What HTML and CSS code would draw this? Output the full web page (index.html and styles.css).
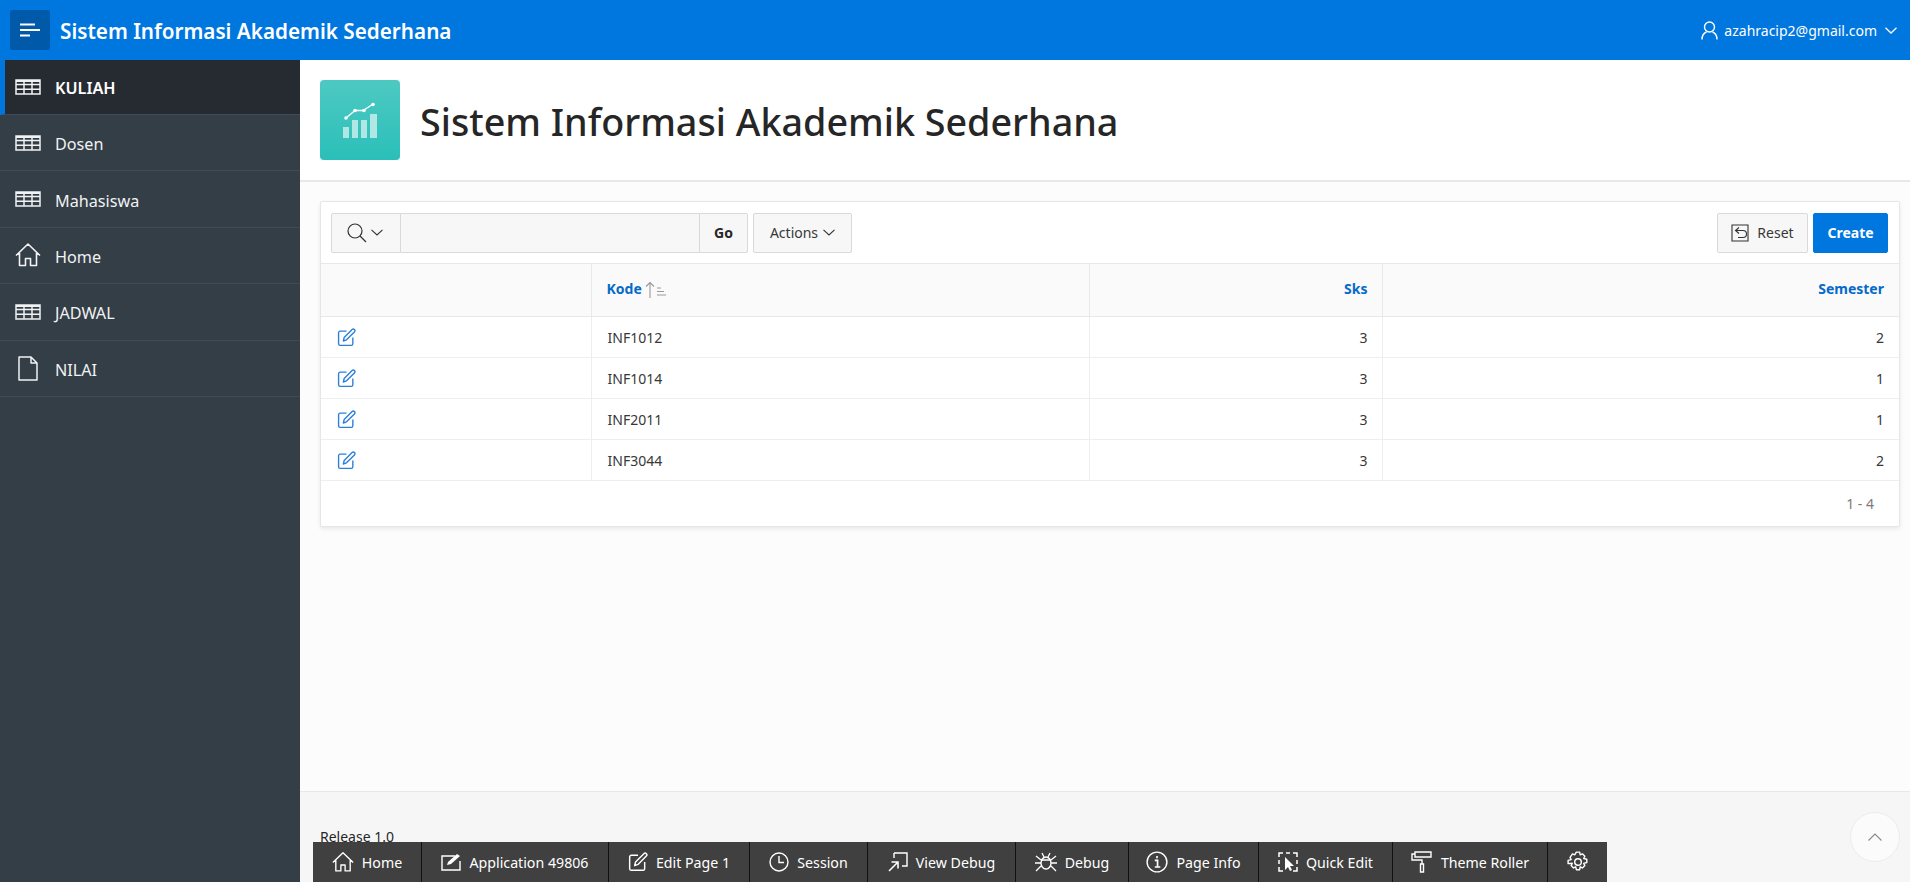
FILE: index.html
```html
<!DOCTYPE html>
<html lang="en">
<head>
<meta charset="UTF-8" />
<title>Sistem Informasi Akademik Sederhana</title>
<link rel="stylesheet" href="styles.css">
</head>
<body>

<svg class="defs" aria-hidden="true">
  <symbol id="i-table" viewBox="0 0 26 16">
    <path d="M1 1h24v14H1zM1 5.500h24M1 10.200h24M9 1v14M17 1v14" fill="none" stroke="currentColor" stroke-width="1.500"/>
    <path d="M1 1h24v2H1z" fill="currentColor"/>
  </symbol>
  <symbol id="i-home" viewBox="0 0 26 24">
    <path d="M1 12.500 13 1l12 11.500M4.500 10v12.500h6v-7h5v7h6V10" fill="none" stroke="currentColor" stroke-width="1.600" stroke-linejoin="round"/>
  </symbol>
  <symbol id="i-edit" viewBox="0 0 18 18">
    <path d="M9 3H3a1.500 1.500 0 0 0-1.500 1.500v10.500a1.500 1.500 0 0 0 1.500 1.500h10.500a1.500 1.500 0 0 0 1.500-1.500V9" fill="none" stroke="currentColor" stroke-width="1.300"/>
    <path d="M6 12.300 6.800 9 14.300 1.500a1.400 1.400 0 0 1 2.200 2.200L9 11.200z" fill="none" stroke="currentColor" stroke-width="1.300" stroke-linejoin="round"/>
  </symbol>
</svg>

<header class="topbar">
  <div class="topbar-left">
    <button class="nav-toggle" aria-label="Menu">
      <svg width="20" height="14" viewBox="0 0 20 14"><path d="M0 1.500h15M0 7h20M0 12.500h10" stroke="#fff" stroke-width="2.200"/></svg>
    </button>
    <span class="app-title">Sistem Informasi Akademik Sederhana</span>
  </div>
  <div class="user-menu">
    <svg width="17" height="19" viewBox="0 0 17 19"><circle cx="8.500" cy="6" r="5" fill="none" stroke="#fff" stroke-width="1.400"/><path d="M1 18.500c0-4 2-6.500 4.500-7.500M16 18.500c0-4-2-6.500-4.500-7.500" fill="none" stroke="#fff" stroke-width="1.400"/></svg>
    <span>azahracip2@gmail.com</span>
    <svg width="12" height="7" viewBox="0 0 12 7"><path d="M.5.800 6 6l5.500-5.200" fill="none" stroke="#fff" stroke-width="1.300"/></svg>
  </div>
</header>

<div class="shell">
  <nav class="sidebar">
    <a class="nav-item active"><svg class="nav-icon"><use href="#i-table"/></svg>KULIAH</a>
    <a class="nav-item"><svg class="nav-icon"><use href="#i-table"/></svg>Dosen</a>
    <a class="nav-item"><svg class="nav-icon"><use href="#i-table"/></svg>Mahasiswa</a>
    <a class="nav-item"><svg class="nav-icon home"><use href="#i-home"/></svg>Home</a>
    <a class="nav-item"><svg class="nav-icon"><use href="#i-table"/></svg>JADWAL</a>
    <a class="nav-item">
      <svg class="nav-icon file" viewBox="0 0 20 25"><path d="M1 1h12l6 6v17H1zM13 1v6h6" fill="none" stroke="currentColor" stroke-width="1.500" stroke-linejoin="round"/></svg>NILAI
    </a>
  </nav>

  <main class="content">
    <section class="hero">
      <div class="hero-icon">
        <svg width="34" height="36" viewBox="0 0 34 36">
          <path d="M3 16 12 8.500 20 8.500 31 1.500" fill="none" stroke="#fff" stroke-width="1.300"/>
          <circle cx="3" cy="16" r="1.800" fill="#fff"/><circle cx="12" cy="8.500" r="1.800" fill="#fff"/><circle cx="21" cy="8.500" r="1.800" fill="#fff"/><circle cx="30" cy="2.500" r="1.800" fill="#fff"/>
          <path d="M0 25h6v11H0zM9 18h6v18H9zM18 18h6v18h-6zM27 12h7v24h-7z" fill="#fff" fill-opacity=".6"/>
        </svg>
      </div>
      <h1>Sistem Informasi Akademik Sederhana</h1>
    </section>

    <div class="body-area">
      <section class="report">
        <div class="toolbar">
          <div class="search-group">
            <button class="btn search-btn">
              <svg width="20" height="20" viewBox="0 0 20 20"><circle cx="8" cy="8" r="7" fill="none" stroke="#333" stroke-width="1.200"/><path d="m13 13 6 6" stroke="#333" stroke-width="1.200"/></svg>
              <svg width="12" height="7" viewBox="0 0 12 7"><path d="M.5.800 6 6l5.500-5.200" fill="none" stroke="#333" stroke-width="1.100"/></svg>
            </button>
            <input class="search-input" type="text" aria-label="Search">
            <button class="btn go-btn">Go</button>
          </div>
          <button class="btn actions-btn">Actions
            <svg width="12" height="7" viewBox="0 0 12 7"><path d="M.5.800 6 6l5.500-5.200" fill="none" stroke="#333" stroke-width="1.100"/></svg>
          </button>
          <div class="toolbar-right">
            <button class="btn reset-btn">
              <svg width="18" height="18" viewBox="0 0 18 18"><path d="M1 1h16v16H1z" fill="none" stroke="#333" stroke-width="1.100"/><path d="M8 3.500 4.500 6.500 8 9.500M4.500 6.500H12a3 3 0 0 1 0 7H7" fill="none" stroke="#333" stroke-width="1.100"/></svg>
              Reset
            </button>
            <button class="btn create-btn">Create</button>
          </div>
        </div>

        <table class="grid">
          <colgroup>
            <col class="col-link"><col class="col-kode"><col class="col-sks"><col>
          </colgroup>
          <thead>
            <tr>
              <th></th>
              <th class="kode-head">Kode
                <svg width="22" height="17" viewBox="0 0 22 17"><path d="M5 17V1.500M1 5.500l4-4 4 4" fill="none" stroke="#999" stroke-width="1.100"/><path d="M12 7h4M12 10.500h7M12 14h9" stroke="#999" stroke-width="1.100"/></svg>
              </th>
              <th class="num">Sks</th>
              <th class="num">Semester</th>
            </tr>
          </thead>
          <tbody>
            <tr>
              <td class="link-cell"><svg class="edit-icon"><use href="#i-edit"/></svg></td>
              <td>INF1012</td><td class="num">3</td><td class="num">2</td>
            </tr>
            <tr>
              <td class="link-cell"><svg class="edit-icon"><use href="#i-edit"/></svg></td>
              <td>INF1014</td><td class="num">3</td><td class="num">1</td>
            </tr>
            <tr>
              <td class="link-cell"><svg class="edit-icon"><use href="#i-edit"/></svg></td>
              <td>INF2011</td><td class="num">3</td><td class="num">1</td>
            </tr>
            <tr>
              <td class="link-cell"><svg class="edit-icon"><use href="#i-edit"/></svg></td>
              <td>INF3044</td><td class="num">3</td><td class="num">2</td>
            </tr>
          </tbody>
        </table>
        <div class="pagination">1 - 4</div>
      </section>
    </div>

    <footer class="page-footer">Release 1.0</footer>
  </main>
</div>

<div class="dev-toolbar">
  <a class="dev-item w-home"><svg class="dev-icon big"><use href="#i-home"/></svg>Home</a>
  <a class="dev-item w-app">
    <svg class="dev-icon" viewBox="0 0 20 18"><path d="M14 3H1v14h18V8" fill="none" stroke="currentColor" stroke-width="1.400"/><path d="m6 12 1-3 9-8 3 2-9 8z" fill="currentColor"/></svg>Application 49806
  </a>
  <a class="dev-item w-edit"><svg class="dev-icon"><use href="#i-edit"/></svg>Edit Page 1</a>
  <a class="dev-item w-session">
    <svg class="dev-icon" viewBox="0 0 20 20"><circle cx="10" cy="10" r="9" fill="none" stroke="currentColor" stroke-width="1.400"/><path d="M10 4v6.500h5" fill="none" stroke="currentColor" stroke-width="1.400"/></svg>Session
  </a>
  <a class="dev-item w-view">
    <svg class="dev-icon" viewBox="0 0 20 20"><path d="M6 1h13v13h-5M6 1v5" fill="none" stroke="currentColor" stroke-width="1.400"/><path d="M1 19 9 11M3.500 10H10v6.500" fill="none" stroke="currentColor" stroke-width="1.600"/></svg>View Debug
  </a>
  <a class="dev-item w-debug">
    <svg class="dev-icon big" viewBox="0 0 22 20"><ellipse cx="11" cy="11" rx="5" ry="6" fill="none" stroke="currentColor" stroke-width="1.400"/><path d="M6 8h10M7 1l2 4M15 1l-2 4M1 4l5 4M21 4l-5 4M0 11h6M22 11h-6M1 19l5-5M21 19l-5-5" fill="none" stroke="currentColor" stroke-width="1.300"/></svg>Debug
  </a>
  <a class="dev-item w-info">
    <svg class="dev-icon big" viewBox="0 0 20 20"><circle cx="10" cy="10" r="9" fill="none" stroke="currentColor" stroke-width="1.300"/><path d="M8 8.500h2.500V14M8 14.500h5M10 4.500v2" fill="none" stroke="currentColor" stroke-width="1.500"/></svg>Page Info
  </a>
  <a class="dev-item w-quick">
    <svg class="dev-icon" viewBox="0 0 20 20"><path d="M1 5V1h4M8 1h4M15 1h4v4M1 8v4M19 8v4M1 15v4h4M15 19h4v-4" fill="none" stroke="currentColor" stroke-width="1.500"/><path d="M7 5v13l3-3 2 4 2-1-2-4h4z" fill="currentColor"/></svg>Quick Edit
  </a>
  <a class="dev-item w-theme">
    <svg class="dev-icon big" viewBox="0 0 20 22"><path d="M3 1h16v5H3zM3 3H0v6h10v4" fill="none" stroke="currentColor" stroke-width="1.400"/><path d="M8.500 13h3v8h-3z" fill="none" stroke="currentColor" stroke-width="1.400"/></svg>Theme Roller
  </a>
  <a class="dev-item w-gear">
    <svg class="dev-icon big" viewBox="0 0 20 20"><circle cx="10" cy="10" r="3" fill="none" stroke="currentColor" stroke-width="1.300"/><path d="M8.500 1h3l.5 2.500 2-.9 2.200 2.200-1 2 2.800.7v3l-2.800.7 1 2-2.200 2.200-2-1-.5 2.600h-3l-.6-2.600-2 1-2.100-2.200 1-2L1 11.500v-3l2.800-.7-1-2L5 2.600l2 .9z" fill="none" stroke="currentColor" stroke-width="1.300" stroke-linejoin="round"/></svg>
  </a>
</div>

<button class="to-top" aria-label="Top">
  <svg width="14" height="8" viewBox="0 0 14 8"><path d="M.5 7.500 7 1l6.500 6.500" fill="none" stroke="#888" stroke-width="1.100"/></svg>
</button>

</body>
</html>
```

FILE: styles.css
```css
/* Page frame */
html {
  background: #fff;
}

body {
  font-family: "Noto Sans", "Open Sans", sans-serif;
  margin: 0;
  height: 882px;
  overflow: hidden;
  display: flex;
  flex-direction: column;
  color: #262626;
  font-size: 14px;
}

.defs {
  display: none;
}

button {
  font-family: inherit;
}

/* Top bar */
.topbar {
  height: 60px;
  flex: none;
  background: #0076df;
  color: #fff;
  display: flex;
  justify-content: space-between;
  align-items: center;
  padding: 0 13px 0 10px;
}

.topbar-left {
  display: flex;
  align-items: center;
  gap: 10px;
}

.nav-toggle {
  width: 40px;
  height: 40px;
  border: none;
  border-radius: 2px;
  background: #0059a9;
  display: flex;
  align-items: center;
  justify-content: center;
  padding: 0;
}

.app-title {
  font-size: 20.7px;
  font-weight: 600;
  padding-top: 1px;
}

.user-menu {
  display: flex;
  align-items: center;
  gap: 6px;
  font-size: 14px;
}

.user-menu span {
  margin-right: 2px;
}

/* Side navigation */
.shell {
  flex: 1;
  display: flex;
  min-height: 0;
}

.sidebar {
  width: 300px;
  flex: none;
  background: #343e47;
}

.nav-item {
  height: 56.4px;
  box-sizing: border-box;
  display: flex;
  align-items: center;
  padding: 3px 0 0 15px;
  border-bottom: 1px solid #414b54;
  color: #f1f2f3;
  font-size: 16.2px;
}

.nav-item.active {
  height: 55px;
  background: #262b32;
  border-left: 5px solid #0076df;
  padding: 2px 0 0 10px;
  color: #fff;
  font-weight: 600;
}

.nav-icon {
  width: 26px;
  height: 16px;
  margin: -3px 14px 0 0;
  color: #f1f2f3;
}

.nav-icon.home {
  height: 24px;
}

.nav-icon.file {
  height: 25px;
  width: 20px;
  margin: -3px 17px 0 3px;
}

/* Main column */
.content {
  flex: 1;
  display: flex;
  flex-direction: column;
  background: #fcfcfc;
  min-width: 0;
}

.hero {
  height: 120px;
  flex: none;
  box-sizing: content-box;
  background: #fff;
  border-bottom: 2px solid #e8e8e8;
  display: flex;
  align-items: center;
  padding-left: 20px;
  gap: 20px;
}

.hero-icon {
  width: 80px;
  height: 80px;
  border-radius: 4px;
  background: linear-gradient(#4dc9c2, #2bbfb9);
  display: flex;
  align-items: center;
  justify-content: center;
}

.hero h1 {
  margin: 0;
  padding-top: 2px;
  font-size: 37.7px;
  font-weight: 500;
  color: #262626;
}

.body-area {
  flex: 1;
  padding: 19px 10px 0 20px;
}

/* Report card */
.report {
  background: #fff;
  border: 1px solid #e6e6e6;
  box-shadow: 0 2px 4px rgba(0, 0, 0, 0.08);
  border-radius: 2px;
  height: 326px;
  box-sizing: border-box;
}

.toolbar {
  height: 61px;
  box-sizing: border-box;
  display: flex;
  align-items: center;
  padding: 0 11px 0 10px;
  gap: 5px;
}

.btn {
  height: 40px;
  box-sizing: border-box;
  border: 1px solid #d9d9d9;
  background: #f7f7f7;
  color: #383838;
  font-size: 14px;
  border-radius: 2px;
  display: flex;
  align-items: center;
  justify-content: center;
  padding: 0;
}

.search-group {
  display: flex;
}

.search-btn {
  width: 70px;
  gap: 4px;
  padding-right: 2px;
  border-radius: 2px 0 0 2px;
}

.search-input {
  width: 298px;
  height: 40px;
  box-sizing: border-box;
  border: 1px solid #d9d9d9;
  border-left: none;
  border-right: none;
  background: #f7f7f7;
  padding: 0;
}

.go-btn {
  width: 49px;
  font-weight: 700;
  color: #262626;
  border-radius: 0 2px 2px 0;
}

.actions-btn {
  width: 99px;
  gap: 5px;
}

.toolbar-right {
  margin-left: auto;
  display: flex;
  gap: 5px;
}

.reset-btn {
  width: 91px;
  gap: 8px;
}

.create-btn {
  width: 75px;
  background: #0076df;
  border-color: #0076df;
  color: #fff;
  font-weight: 700;
}

/* Grid */
.grid {
  width: 100%;
  border-collapse: collapse;
  table-layout: fixed;
  color: #383838;
}

.col-link {
  width: 270px;
}

.col-kode {
  width: 498px;
}

.col-sks {
  width: 293px;
}

.grid th {
  height: 53px;
  box-sizing: border-box;
  background: #fafafa;
  color: #056ac8;
  font-weight: 700;
  font-size: 14px;
  text-align: left;
  padding: 0 15px 3px;
  border: 1px solid #e8e8e8;
}

.grid td {
  height: 41px;
  box-sizing: border-box;
  padding: 0 15px 0 16px;
  border: 1px solid #eee;
}

.grid tr > :first-child {
  border-left: none;
}

.grid .num {
  text-align: right;
  padding-right: 14px;
}

.grid tr > :last-child {
  border-right: none;
  padding-right: 15px;
}

.kode-head svg {
  vertical-align: -4px;
}

.link-cell {
  line-height: 0;
}

.edit-icon {
  width: 19px;
  height: 19px;
  color: #2a7fdb;
}

.pagination {
  height: 44px;
  display: flex;
  align-items: center;
  justify-content: flex-end;
  padding-right: 25px;
  color: #7b7b7b;
}

/* Footer */
.page-footer {
  height: 91px;
  flex: none;
  box-sizing: border-box;
  background: #f6f6f6;
  border-top: 1px solid #e8e8e8;
  padding: 35px 20px 0;
}

/* Developer toolbar, floats over the footer */
.dev-toolbar {
  position: fixed;
  left: 313px;
  top: 842px;
  height: 40px;
  display: flex;
  background: #404040;
  color: #fff;
  font-size: 14.2px;
}

.dev-item {
  box-sizing: border-box;
  display: flex;
  align-items: center;
  justify-content: center;
  gap: 8px;
  border-right: 1px solid #111;
}

.dev-item:last-child {
  border-right: none;
}

.dev-icon {
  width: 20px;
  height: 20px;
  color: #fff;
}

.dev-icon.big {
  width: 22px;
  height: 22px;
}

.w-home { width: 109px; }
.w-app { width: 187px; }
.w-edit { width: 141px; }
.w-session { width: 118px; }
.w-view { width: 148px; }
.w-debug { width: 113px; }
.w-info { width: 130px; }
.w-quick { width: 134px; }
.w-theme { width: 155px; }
.w-gear { width: 59px; }

.to-top {
  position: fixed;
  left: 1850px;
  top: 812px;
  width: 50px;
  height: 50px;
  border-radius: 50%;
  border: 1px solid #ebebeb;
  background: #fbfbfb;
  display: flex;
  align-items: center;
  justify-content: center;
  padding: 0;
}
```
